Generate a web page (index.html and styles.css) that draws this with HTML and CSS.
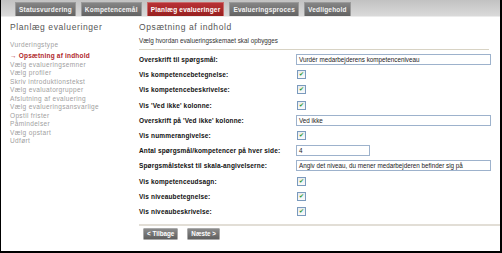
FILE: index.html
```html
<!DOCTYPE html>
<html lang="da">
<head>
  <meta charset="UTF-8">
  <title>Planlæg evalueringer</title>
  <link rel="stylesheet" href="styles.css">
</head>
<body>
  <div class="frame">
    <div class="tabbar">
      <span class="tab">Statusvurdering</span>
      <span class="tab">Kompetencemål</span>
      <span class="tab active">Planlæg evalueringer</span>
      <span class="tab">Evalueringsproces</span>
      <span class="tab">Vedligehold</span>
    </div>

    <div class="content">
      <div class="sidebar">
        <h2 class="side-title">Planlæg evalueringer</h2>
        <ul class="steps">
          <li class="first">Vurderingstype</li>
          <li class="current">&rarr; Opsætning af indhold</li>
          <li>Vælg evalueringsemner</li>
          <li>Vælg profiler</li>
          <li>Skriv introduktionstekst</li>
          <li>Vælg evaluatorgrupper</li>
          <li>Afslutning af evaluering</li>
          <li>Vælg evalueringsansvarlige</li>
          <li>Opstil frister</li>
          <li>Påmindelser</li>
          <li>Vælg opstart</li>
          <li>Udført</li>
        </ul>
      </div>

      <div class="main">
        <h2 class="main-title">Opsætning af indhold</h2>
        <p class="intro">Vælg hvordan evalueringsskemaet skal opbygges</p>

        <div class="form">
          <label>Overskrift til spørgsmål:</label>
          <div><span class="field">Vurdér medarbejderens kompetenceniveau</span></div>

          <label>Vis kompetencebetegnelse:</label>
          <div><span class="check">&#10004;</span></div>

          <label>Vis kompetencebeskrivelse:</label>
          <div><span class="check">&#10004;</span></div>

          <label>Vis 'Ved ikke' kolonne:</label>
          <div><span class="check">&#10004;</span></div>

          <label>Overskrift på 'Ved ikke' kolonne:</label>
          <div><span class="field">Ved ikke</span></div>

          <label>Vis nummerangivelse:</label>
          <div><span class="check">&#10004;</span></div>

          <label>Antal spørgsmål/kompetencer på hver side:</label>
          <div><span class="field small">4</span></div>

          <label>Spørgsmålstekst til skala-angivelserne:</label>
          <div><span class="field">Angiv det niveau, du mener medarbejderen befinder sig på</span></div>

          <label>Vis kompetenceudsagn:</label>
          <div><span class="check">&#10004;</span></div>

          <label>Vis niveaubetegnelse:</label>
          <div><span class="check">&#10004;</span></div>

          <label>Vis niveaubeskrivelse:</label>
          <div><span class="check">&#10004;</span></div>
        </div>

        <div class="buttons">
          <span class="btn">&lt; Tilbage</span>
          <span class="btn">Næste &gt;</span>
        </div>
      </div>
    </div>
  </div>
</body>
</html>
```

FILE: styles.css
```css
body {
  margin: 0;
  font-family: "Liberation Sans", Arial, sans-serif;
  background: #fff;
}

.frame {
  width: 502px;
  height: 253px;
  box-sizing: border-box;
  border-left: 1px solid #000;
  border-right: 2px solid #000;
  border-bottom: 2px solid #000;
  overflow: hidden;
}

/* Tabs */
.tabbar {
  height: 16px;
  padding-left: 14px;
  display: flex;
  align-items: flex-end;
  gap: 5px;
  background: linear-gradient(#c2c2c2, #dadada);
  border-bottom: 1px solid #ececec;
}

.tab {
  height: 13px;
  line-height: 13px;
  padding: 0 3px;
  font-size: 6.5px;
  font-weight: bold;
  letter-spacing: 0.2px;
  color: #f2f2f2;
  background: linear-gradient(#858585, #636363);
  border: 1px solid #9a9a9a;
  border-bottom: none;
}

.tab.active {
  background: linear-gradient(#b83236, #98201f);
  border-color: #c86a6a;
  color: #fff;
}

/* Layout */
.content {
  display: grid;
  grid-template-columns: 128px 1fr;
}

.sidebar {
  padding-left: 9px;
}

.side-title,
.main-title {
  margin: 0;
  padding-top: 5px;
  height: 14px;
  font-size: 8.5px;
  font-weight: normal;
  letter-spacing: 0.6px;
  color: #555;
}

.steps {
  list-style: none;
  margin: 0;
  padding: 0;
  font-size: 6.5px;
  letter-spacing: 0.35px;
  color: #a0a0a0;
}

.steps li {
  line-height: 8.5px;
}

.steps .first {
  margin-top: 5px;
  margin-bottom: 2.5px;
}

.steps .current {
  color: #b0262a;
  font-weight: bold;
  letter-spacing: 0.2px;
}

.main {
  padding-left: 10px;
  padding-right: 8px;
}

.intro {
  margin: 0;
  font-size: 6.3px;
  color: #333;
  line-height: 9px;
  padding-bottom: 4px;
  border-bottom: 1px solid #d8d3c4;
  margin-right: 3px;
}

/* Form rows */
.form {
  display: grid;
  grid-template-columns: 157px 195px;
  grid-auto-rows: 15.2px;
  align-items: center;
  margin-top: 2px;
}

.form label {
  font-size: 6.5px;
  font-weight: bold;
  letter-spacing: 0.15px;
  color: #111;
}

.field {
  display: block;
  height: 9px;
  line-height: 9px;
  padding: 0 2px;
  border: 1px solid #9db2cc;
  font-size: 6.3px;
  color: #222;
  white-space: nowrap;
  overflow: hidden;
}

.field.small {
  width: 68px;
}

.check {
  display: block;
  width: 7px;
  height: 7px;
  margin-left: 1px;
  border: 1px solid #7a9abd;
  background: linear-gradient(#e8ecef, #fafafa);
  color: #2d9a2d;
  font-size: 6px;
  line-height: 7px;
  text-align: center;
}

.buttons {
  margin-top: 5px;
  padding-top: 2px;
  border-top: 2px solid #e2ded6;
  margin-right: -10px;
  display: flex;
  gap: 9px;
  padding-left: 4px;
}

.btn {
  height: 10px;
  line-height: 10px;
  padding: 0 3px;
  font-size: 6.3px;
  font-weight: bold;
  color: #fff;
  background: linear-gradient(#8a8a8a, #5f5f5f);
  border: 1px solid #aaa;
  border-radius: 1px;
}
```
